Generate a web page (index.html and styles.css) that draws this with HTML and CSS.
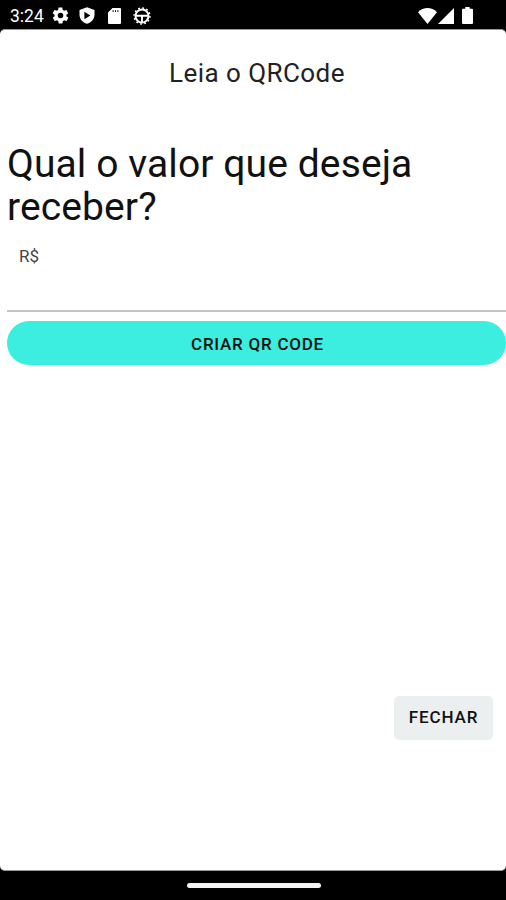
FILE: index.html
```
<!DOCTYPE html>
<html lang="pt-BR">

<head>
    <meta charset="utf-8">
    <title>Leia o QRCode</title>
    <link rel="stylesheet" href="styles.css">
</head>

<body>
    <div class="statusbar">
        <span class="time">3:24</span>
        <svg class="gear" width="19" height="19" viewBox="0 0 24 24">
            <path fill="#fff" d="M19.4 13c0-.3.1-.6.1-1s0-.7-.1-1l2.1-1.6c.2-.2.3-.4.1-.7l-2-3.4c-.1-.2-.4-.3-.6-.2l-2.500 1c-.5-.4-1.100-.7-1.700-1l-.4-2.600c0-.3-.2-.5-.5-.5h-4c-.2 0-.4.200-.5.400l-.4 2.700c-.6.2-1.100.6-1.700 1l-2.500-1c-.2-.1-.5 0-.6.200l-2 3.400c-.1.300 0 .5.200.7L4.600 11c0 .3-.1.600-.1 1s0 .7.100 1l-2.100 1.600c-.2.200-.3.400-.1.700l2 3.400c.1.200.4.300.6.200l2.500-1c.5.400 1.100.7 1.700 1l.4 2.600c0 .3.200.5.500.5h4c.2 0 .5-.2.500-.5l.4-2.600c.6-.3 1.200-.6 1.700-1l2.500 1c.2.1.5 0 .6-.2l2-3.400c.1-.2 0-.5-.2-.7zM12 15.500a3.500 3.500 0 1 1 0-7 3.500 3.500 0 0 1 0 7z" />
        </svg>
        <svg class="shield" width="18" height="19" viewBox="0 0 24 24">
            <path fill="#fff" fill-rule="evenodd" d="M12 1 2 4.800V11c0 5.700 4.200 10.600 10 12 5.800-1.400 10-6.300 10-12V4.800zM8.500 7v10l8-5z" />
        </svg>
        <svg class="card" width="13" height="16" viewBox="0 0 13 16">
            <path fill="#fff" fill-rule="evenodd" d="M4.500 0H12a1 1 0 0 1 1 1v14a1 1 0 0 1-1 1H1a1 1 0 0 1-1-1V4.500zM4.600 2.300v1.600h1V2.300zM7 2.300v1.600h1V2.300zM9.400 2.300v1.600h1V2.300z" />
        </svg>
        <svg class="wheel" width="18" height="18" viewBox="0 0 18 18" fill="none" stroke="#fff">
            <circle cx="9" cy="9" r="6.500" stroke-width="2" />
            <circle cx="9" cy="9" r="8" stroke-width="1.400" stroke-dasharray="1.800 2.390" />
            <path stroke-width="2" d="M2.500 8.800h13M9 9v6.500" />
        </svg>
        <svg class="wifi" width="19" height="16" viewBox="0 0 19 16">
            <path fill="#fff" d="M0 4.200C5.500-1.400 13.500-1.400 19 4.200L9.500 16z" />
        </svg>
        <svg class="signal" width="16" height="16" viewBox="0 0 16 16">
            <path fill="#fff" d="M16 0v16H0z" />
        </svg>
        <svg class="battery" width="11" height="17" viewBox="0 0 11 17">
            <path fill="#fff" d="M3.300 0h4.400v1.700H10a1 1 0 0 1 1 1V16a1 1 0 0 1-1 1H1a1 1 0 0 1-1-1V2.700a1 1 0 0 1 1-1h2.300z" />
        </svg>
    </div>

    <div class="screen">
        <div class="title">Leia o QRCode</div>
        <div class="question">Qual o valor que deseja receber?</div>
        <div class="field">
            <label>R$</label>
        </div>
        <button class="btn criar">CRIAR QR CODE</button>
        <button class="btn fechar">FECHAR</button>
    </div>

    <div class="navbar">
        <div class="handle"></div>
    </div>
</body>

</html>
```
FILE: styles.css
```
html,
body {
    margin: 0;
    width: 100%;
    height: 100%;
    font-family: Roboto, "Liberation Sans", sans-serif;
    color: #111;
    background-color: black;
}

body {
    display: flex;
    flex-direction: column;
    overflow: hidden;
}

.statusbar {
    height: 29px;
    flex: none;
    display: flex;
    align-items: center;
    box-sizing: border-box;
    padding: 2px 33px 0 10px;
    color: white;
}

.time {
    width: 41px;
    font-size: 17.5px;
    line-height: 26px;
    padding-top: 1px;
}

.shield {
    margin-left: 8px;
}

.card {
    margin-left: 12px;
}

.wheel {
    margin-left: 12px;
}

.wifi {
    margin-left: auto;
}

.signal {
    margin-left: 1px;
}

.battery {
    margin-left: 8px;
}

.screen {
    flex: 1;
    display: flex;
    flex-direction: column;
    box-sizing: border-box;
    padding-left: 7px;
    border-top: 1px solid #999;
    border-bottom: 1px solid #999;
    border-radius: 5px;
    background-color: white;
}

.title {
    margin-top: 27px;
    padding-left: 1px;
    font-size: 26px;
    line-height: 32px;
    letter-spacing: 0.45px;
    color: #222;
    text-align: center;
}

.question {
    margin-top: 54px;
    font-size: 39px;
    line-height: 43px;
    letter-spacing: 0.1px;
}

.field {
    height: 83px;
    box-sizing: border-box;
    padding: 17px 12px 0;
    border-bottom: 2px solid #c4c4c4;
}

.field label {
    display: block;
    font-size: 17px;
    line-height: 20px;
    color: #444;
}

.btn {
    height: 44px;
    border: none;
    padding: 0;
    font-family: inherit;
    font-size: 17px;
    font-weight: 500;
    letter-spacing: 0.9px;
    color: #111;
}

.criar {
    margin-top: 9px;
    padding: 2px 0 0 2px;
    border-radius: 22px;
    letter-spacing: 0.75px;
    background-color: #3beedf;
}

.fechar {
    width: 99px;
    align-self: flex-end;
    margin: 331px 13px 0 0;
    padding-bottom: 2px;
    border-radius: 5px;
    background-color: #ebeff0;
}

.navbar {
    height: 29px;
    flex: none;
    display: flex;
    justify-content: center;
    align-items: center;
    padding-left: 1px;
}

.handle {
    width: 134px;
    height: 5px;
    border-radius: 3px;
    background-color: #f2f2f2;
}
```
